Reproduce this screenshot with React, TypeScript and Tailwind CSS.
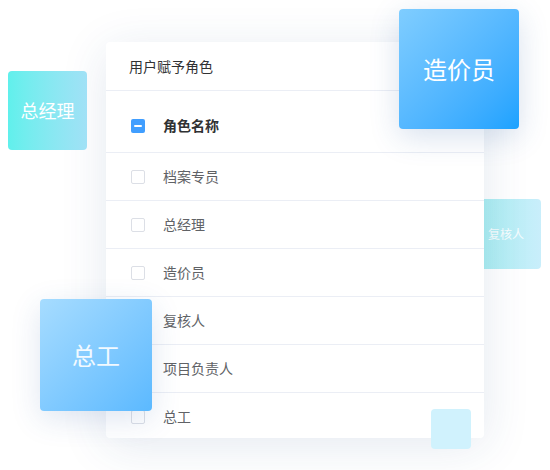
const roles = ['档案专员', '总经理', '造价员', '复核人', '项目负责人', '总工'];

const Checkbox = ({ indeterminate }: { indeterminate?: boolean }) =>
  indeterminate ? (
    <span className="flex h-[14px] w-[14px] shrink-0 items-center justify-center rounded-[2px] bg-[#409eff]">
      <span className="h-[2px] w-[8px] rounded-[1px] bg-white" />
    </span>
  ) : (
    <span className="h-[14px] w-[14px] shrink-0 rounded-[2px] border border-[#dcdfe6] bg-white" />
  );

const App = () => {
  return (
    <div className="relative h-[470px] w-[550px] overflow-hidden bg-white font-['Noto_Sans_CJK_SC','Noto_Sans',sans-serif]">
      {/* tile behind the card */}
      <div className="absolute left-[471px] top-[199px] flex h-[70px] w-[70px] items-center justify-center rounded-[4px] bg-linear-to-r from-[#a5eff0] to-[#c9eefb] text-[12px] text-white/90">
        复核人
      </div>

      <div className="relative z-10 ml-[106px] mt-[42px] h-[396px] w-[378px] overflow-hidden rounded-[4px] bg-white shadow-[0_8px_48px_rgba(30,70,130,0.12)]">
        <div className="flex h-[49px] items-center border-b border-[#ebeef5] pl-[23px] text-[14px] text-[#303133]">
          用户赋予角色
        </div>
        <div className="flex h-[62px] items-center gap-[18px] border-b border-[#ebeef5] pl-[25px] pt-[8px] text-[14px] font-bold text-[#303133]">
          <Checkbox indeterminate />
          <span>角色名称</span>
        </div>
        {roles.map((r) => (
          <div
            key={r}
            className="flex h-[48px] shrink-0 items-center gap-[18px] border-b border-[#ebeef5] pl-[25px] text-[14px] text-[#606266]"
          >
            <Checkbox />
            <span>{r}</span>
          </div>
        ))}
      </div>

      <div className="absolute left-[8px] top-[71px] z-20 flex h-[79px] w-[79px] items-center justify-center rounded-[4px] bg-linear-to-r from-[#60f0ec] to-[#a0e1f6] text-[18px] text-white">
        总经理
      </div>

      <div className="absolute left-[399px] top-[9px] z-20 flex h-[120px] w-[120px] items-center justify-center rounded-[4px] bg-linear-to-br from-[#7fcdff] to-[#1aa2ff] text-[24px] text-white shadow-[0_8px_30px_rgba(40,90,160,0.18)]">
        造价员
      </div>

      <div className="absolute left-[40px] top-[299px] z-20 flex h-[112px] w-[112px] items-center justify-center rounded-[4px] bg-linear-to-br from-[#a6dcff] to-[#5bb9ff] text-[24px] text-white/90 shadow-[0_8px_30px_rgba(40,90,160,0.15)]">
        总工
      </div>

      <div className="absolute left-[431px] top-[409px] z-20 h-[40px] w-[40px] rounded-[4px] bg-[#d0f2fd]" />
    </div>
  );
};

export default App;
